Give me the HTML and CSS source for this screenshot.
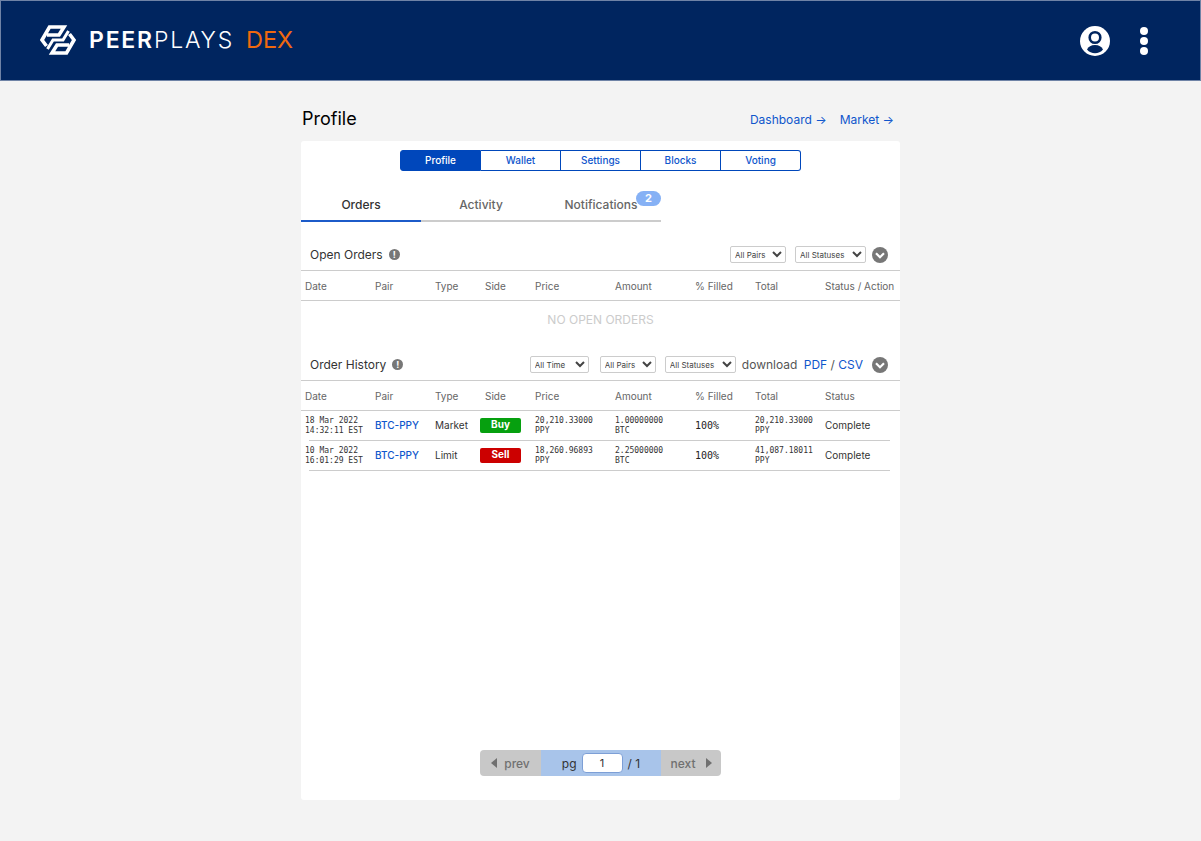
FILE: index.html
```html
<!DOCTYPE html>
<html lang="en">
<head>
  <meta charset="UTF-8" />
  <title>Peerplays DEX - Profile</title>
  <link rel="stylesheet" href="styles.css">
</head>
<body>

  <header class="topbar">
    <div class="brand">
      <svg class="brand-logo" viewBox="0 0 36 30" width="36" height="30">
        <g fill="none" stroke="#fff" stroke-width="3.600">
          <path d="M6.500 21L2 15 9.500 2H24L19 10H7" />
          <path d="M29.500 9L34 15 26.500 28H12L17 20H29" />
          <path d="M7.500 24L13 15H23L28.500 6" stroke-width="3" />
        </g>
      </svg>
      <span class="brand-name"><b>PEER</b>PLAYS</span>
      <span class="brand-dex">DEX</span>
    </div>
    <div class="topbar-icons">
      <svg viewBox="0 0 30 30" width="30" height="30">
        <circle cx="15" cy="15" r="15" fill="#fff" />
        <circle cx="15" cy="11.500" r="5.300" fill="none" stroke="#00255f" stroke-width="2.600" />
        <path d="M7 23.500c1.500-3 4-4.500 8-4.500s6.500 1.500 8 4.500c-2 2.500-5 3.700-8 3.700s-6-1.200-8-3.700z" fill="#00255f" />
      </svg>
      <div class="kebab"><i></i><i></i><i></i></div>
    </div>
  </header>

  <main class="content">
    <div class="page-head">
      <h1>Profile</h1>
      <nav class="page-links">
        <a href="#">Dashboard →</a>
        <a href="#">Market →</a>
      </nav>
    </div>

    <section class="panel">
      <div class="segments">
        <a class="segment active" href="#">Profile</a>
        <a class="segment" href="#">Wallet</a>
        <a class="segment" href="#">Settings</a>
        <a class="segment" href="#">Blocks</a>
        <a class="segment" href="#">Voting</a>
      </div>

      <div class="tabs">
        <a class="tab active" href="#">Orders</a>
        <a class="tab" href="#">Activity</a>
        <a class="tab tab-notify" href="#">Notifications<span class="badge">2</span></a>
      </div>

      <div class="section-head first">
        <h2>Open Orders</h2>
        <span class="info">!</span>
        <div class="filters">
          <select class="filter w-pairs"><option>All Pairs</option></select>
          <select class="filter w-status"><option>All Statuses</option></select>
          <span class="collapse"><svg viewBox="0 0 16 16" width="16" height="16"><path d="M4 6.200l4 4 4-4" fill="none" stroke="#fff" stroke-width="2.200" /></svg></span>
        </div>
      </div>
      <div class="row row-head">
        <span>Date</span><span>Pair</span><span>Type</span><span>Side</span><span>Price</span><span>Amount</span><span>% Filled</span><span>Total</span><span>Status / Action</span>
      </div>
      <div class="empty">NO OPEN ORDERS</div>

      <div class="section-head">
        <h2>Order History</h2>
        <span class="info">!</span>
        <div class="filters">
          <select class="filter w-time"><option>All Time</option></select>
          <select class="filter w-pairs"><option>All Pairs</option></select>
          <select class="filter w-status"><option>All Statuses</option></select>
          <span class="download">download <a class="dl-first" href="#">PDF</a> / <a href="#">CSV</a></span>
          <span class="collapse"><svg viewBox="0 0 16 16" width="16" height="16"><path d="M4 6.200l4 4 4-4" fill="none" stroke="#fff" stroke-width="2.200" /></svg></span>
        </div>
      </div>
      <div class="row row-head">
        <span>Date</span><span>Pair</span><span>Type</span><span>Side</span><span>Price</span><span>Amount</span><span>% Filled</span><span>Total</span><span>Status</span>
      </div>
      <div class="row row-data">
        <span class="mono">18 Mar 2022<br>14:32:11 EST</span>
        <a class="pair" href="#">BTC-PPY</a>
        <span>Market</span>
        <span class="side buy">Buy</span>
        <span class="mono">20,210.33000<br>PPY</span>
        <span class="mono">1.00000000<br>BTC</span>
        <span class="filled">100%</span>
        <span class="mono">20,210.33000<br>PPY</span>
        <span>Complete</span>
      </div>
      <div class="row row-data">
        <span class="mono">10 Mar 2022<br>16:01:29 EST</span>
        <a class="pair" href="#">BTC-PPY</a>
        <span>Limit</span>
        <span class="side sell">Sell</span>
        <span class="mono">18,260.96893<br>PPY</span>
        <span class="mono">2.25000000<br>BTC</span>
        <span class="filled">100%</span>
        <span class="mono">41,087.18011<br>PPY</span>
        <span>Complete</span>
      </div>

      <div class="pager">
        <a class="pager-btn pager-prev" href="#"><i class="tri tri-left"></i>prev</a>
        <div class="pager-mid">pg <input class="pager-input" type="text" value="1" /> / 1</div>
        <a class="pager-btn pager-next" href="#">next<i class="tri tri-right"></i></a>
      </div>
    </section>
  </main>

</body>
</html>
```

FILE: styles.css
```css
* {
  box-sizing: border-box;
}
body {
  margin: 0;
  height: 841px;
  overflow: hidden;
  font-family: Inter, 'Liberation Sans', sans-serif;
  background-color: #f3f3f3;
  color: #333;
}
a {
  color: #0f56cc;
  text-decoration: none;
}

.topbar {
  height: 81px;
  padding: 0 39px 2px;
  display: flex;
  align-items: center;
  justify-content: space-between;
  background-color: #00255f;
  border: 1px solid #6f83a6;
}
.brand {
  display: flex;
  align-items: center;
}
.brand-logo {
  margin-right: 13px;
}
.brand-name {
  font-size: 23px;
  font-weight: 300;
  letter-spacing: 1.8px;
  color: #fff;
}
.brand-name b {
  font-weight: 600;
}
.brand-dex {
  margin-left: 12px;
  font-size: 23.5px;
  font-weight: 400;
  color: #f0690f;
}
.topbar-icons {
  display: flex;
  align-items: center;
  gap: 30px;
  margin-right: 13px;
  margin-top: 2px;
}
.kebab {
  display: flex;
  flex-direction: column;
  gap: 2px;
}
.kebab i {
  width: 8px;
  height: 8px;
  border-radius: 50%;
  background: #fff;
}

.content {
  width: 599px;
  margin: 0 auto;
}
.page-head {
  height: 60px;
  padding: 15px 6px 0 1px;
  display: flex;
  align-items: center;
  justify-content: space-between;
}
h1 {
  margin: 0;
  font-size: 18px;
  font-weight: 400;
  color: #000;
}
.page-links {
  display: flex;
  gap: 13px;
  margin-top: 2px;
  font-size: 12px;
}

.panel {
  width: 599px;
  height: 659px;
  padding-top: 9px;
  background: #fff;
  border-radius: 3px;
  position: relative;
}

.segments {
  width: 401px;
  height: 21px;
  margin: 0 auto 0 99px;
  display: flex;
}
.segment {
  flex: 1;
  display: flex;
  align-items: center;
  justify-content: center;
  padding-bottom: 1px;
  font-size: 10px;
  font-weight: 500;
  border: 1px solid #0047bb;
  border-left-width: 0;
}
.segment:first-child {
  border-left-width: 1px;
  border-radius: 3px 0 0 3px;
}
.segment:last-child {
  border-radius: 0 3px 3px 0;
}
.segment.active {
  background: #0047bb;
  color: #fff;
}

.tabs {
  width: 360px;
  height: 51px;
  display: flex;
}
.tab {
  flex: 1;
  display: flex;
  align-items: flex-end;
  justify-content: center;
  padding-bottom: 8px;
  font-size: 12px;
  font-weight: 500;
  color: #666;
  border-bottom: 2px solid #ccc;
}
.tab.active {
  color: #333;
  border-bottom-color: #1c5bc9;
}
.tab-notify {
  position: relative;
}
.badge {
  position: absolute;
  right: 0;
  top: 20px;
  width: 25px;
  height: 15px;
  border-radius: 8px;
  background: #86b1f5;
  color: #fff;
  font-size: 11px;
  font-weight: 700;
  line-height: 15px;
  text-align: center;
}

.section-head {
  height: 41px;
  padding: 0 12px 7px 9px;
  display: flex;
  align-items: flex-end;
  border-bottom: 1px solid #ccc;
}
.section-head.first {
  height: 49px;
}
h2 {
  margin: 0;
  font-size: 12px;
  font-weight: 400;
  line-height: 16px;
  color: #333;
}
.info {
  width: 11px;
  height: 11px;
  margin: 0 0 3px 6px;
  border-radius: 50%;
  background: #777;
  color: #fff;
  font-size: 9px;
  font-weight: 700;
  line-height: 11px;
  text-align: center;
}
.filters {
  margin-left: auto;
  display: flex;
  align-items: center;
}
.filter {
  height: 17px;
  padding: 0;
  margin-right: 9px;
  font-family: Inter, sans-serif;
  font-size: 8px;
  color: #444;
  background: #fff;
  border: 1px solid #ccc;
  border-radius: 2px;
}
.w-time { width: 59px; margin-right: 11px; }
.w-pairs { width: 56px; }
.w-status { width: 71px; margin-right: 6px; }
.download {
  margin-right: 9px;
  font-size: 12px;
  color: #555;
}
.dl-first {
  margin-left: 3px;
}
.collapse {
  width: 16px;
  height: 16px;
  border-radius: 50%;
  background: #777;
  display: flex;
}

.row {
  height: 30px;
  padding-left: 4px;
  display: grid;
  grid-template-columns: 70px 60px 50px 50px 80px 80px 60px 70px 75px;
  align-items: center;
  border-bottom: 1px solid #ccc;
  font-size: 10px;
}
.row-head {
  color: #666;
  white-space: nowrap;
}
.row-data {
  width: 589px;
  padding-bottom: 1px;
  color: #333;
  border-image: linear-gradient(90deg, transparent 9px, #ccc 9px) 1;
}
.mono {
  margin-top: 2px;
  font-family: 'DejaVu Sans Mono', 'Liberation Mono', monospace;
  font-size: 8px;
  line-height: 10px;
  color: #333;
  white-space: nowrap;
}
.pair {
  font-weight: 500;
}
.filled {
  font-family: 'DejaVu Sans Mono', monospace;
  font-size: 10px;
  color: #222;
}
.side {
  width: 41px;
  height: 15px;
  margin-left: -5px;
  border-radius: 2px;
  color: #fff;
  font-size: 10px;
  font-weight: 700;
  line-height: 13px;
  text-align: center;
}
.buy { background: #06a00f; }
.sell { background: #cc0000; }

.empty {
  height: 39px;
  padding-bottom: 2px;
  display: flex;
  align-items: center;
  justify-content: center;
  font-size: 12px;
  color: #ccc;
}

.pager {
  position: absolute;
  left: 179px;
  top: 609px;
  width: 241px;
  height: 26px;
  display: flex;
  font-size: 12px;
  border-radius: 4px;
  overflow: hidden;
}
.pager-btn {
  width: 60px;
  display: flex;
  align-items: center;
  justify-content: center;
  background: #c8c8c8;
  color: #707070;
  font-weight: 500;
}
.pager-prev {
  width: 61px;
  gap: 7px;
}
.pager-next {
  gap: 10px;
}
.pager-mid {
  flex: 1;
  display: flex;
  align-items: center;
  justify-content: center;
  gap: 5px;
  background: #a8c4ea;
  color: #333;
}
.pager-input {
  width: 41px;
  height: 20px;
  margin: 0;
  padding: 0;
  border: 1px solid #7d9fd6;
  border-radius: 4px;
  background: #fff;
  font-family: Inter, sans-serif;
  font-size: 11px;
  text-align: center;
  color: #333;
}
.tri {
  width: 0;
  height: 0;
  border-top: 5px solid transparent;
  border-bottom: 5px solid transparent;
}
.tri-left { border-right: 6px solid #707070; }
.tri-right { border-left: 6px solid #707070; }
```
